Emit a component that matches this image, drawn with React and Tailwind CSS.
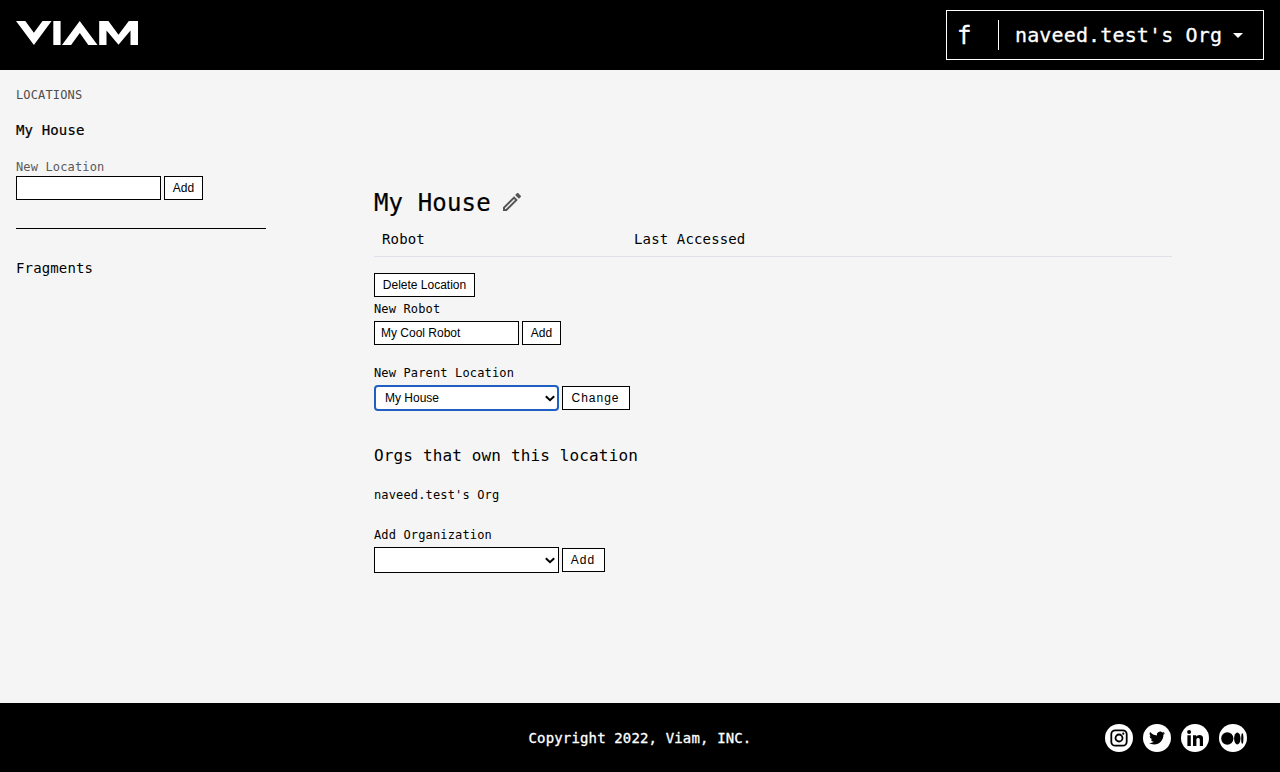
import React from 'react';

const button = 'h-6 shrink-0 border border-black bg-white text-center font-["Liberation_Sans",Arial,sans-serif] text-[12px] leading-[22px] whitespace-nowrap';
const field = 'border border-black bg-white font-["Liberation_Sans",Arial,sans-serif] text-[12px]';

function Logo() {
  return (
    <svg className="mt-[21px] h-6 w-[122px]" viewBox="0 0 122 24" fill="#fff" aria-label="Viam">
      <path d="M0 0h9.300l8.600 11.800L26.500 0h9.100L17.900 24z" />
      <path d="M37.300 0h7.300v24h-7.300z" />
      <path d="M63.700 0l17.800 24h-9.200l-8.500-12L55.100 24H46z" />
      <path d="M83.200 0h9.200L102.500 13.800 112.800 0H122v24h-7.500V9.500L102.500 23.800 90.500 9.500V24h-7.300z" />
    </svg>
  );
}

function Select({ children, focused }) {
  return (
    <div
      className={
        focused
          ? 'flex h-[26px] w-[185px] items-center justify-between rounded-[4px] border-2 border-[#1f5fc4] bg-white pl-[9px] pr-[2px] font-["Liberation_Sans",Arial,sans-serif] text-[12px]'
          : 'flex h-[26px] w-[185px] items-center justify-between border border-black bg-white pl-[10px] pr-[3px] font-["Liberation_Sans",Arial,sans-serif] text-[12px]'
      }
    >
      <span>{children}</span>
      <svg className="h-[7px] w-[10px]" viewBox="0 0 10 7" fill="none" stroke="#000" strokeWidth="2">
        <path d="M.8 1.200L5 5.200l4.200-4" />
      </svg>
    </div>
  );
}

function Social({ label, children }) {
  return (
    <a aria-label={label} className="flex size-7 items-center justify-center rounded-full bg-white text-black">
      {children}
    </a>
  );
}

export default function App() {
  return (
    <div className='flex h-[772px] w-full flex-col bg-[#f5f5f5] font-["DejaVu_Sans_Mono",monospace] tracking-[0.009em] text-black'>
      <header className="flex h-[70px] shrink-0 justify-between bg-black px-4 text-white">
        <Logo />
        <div className="mt-[10px] flex h-[50px] w-[318px] items-center border border-white [-webkit-text-stroke:0.3px_white]">
          <span className="w-[51px] pt-[2px] pl-[10px] text-[24px] leading-none">f</span>
          <span className="h-[30px] w-px bg-white" />
          <span className="ml-4 w-[208px] whitespace-nowrap text-[20px] leading-[30px]">naveed.test's Org</span>
          <svg className="ml-[10px] h-[5px] w-[10px]" viewBox="0 0 10 5" fill="#fff">
            <path d="M0 0h10L5 5z" />
          </svg>
        </div>
      </header>

      <div className="flex min-h-0 grow">
        <aside className="ml-4 w-[250px] shrink-0">
          <h2 className="mt-4 text-[12px] leading-[18px] text-[#4d4d4d]">LOCATIONS</h2>
          <div className="mt-4 text-[14px] leading-5 [-webkit-text-stroke:0.2px_black]">My House</div>
          <div className="mt-[19px] text-[12px] leading-4 text-[#5a5a5a]">New Location</div>
          <div className="mt-px flex gap-[3px]">
            <div className={`${field} h-6 w-[145px]`} />
            <button className={`${button} w-[39px] tracking-normal`}>Add</button>
          </div>
          <hr className="mt-7 border-t border-black" />
          <div className="mt-[29px] text-[14px] leading-5">Fragments</div>
        </aside>

        <main className="ml-[108px] w-[798px] pt-[115px]">
          <div className="flex h-9 items-center">
            <h1 className="w-[118px] text-[24px] leading-9 whitespace-nowrap [-webkit-text-stroke:0.2px_black]">My House</h1>
            <svg className="mb-[2px] ml-[8px] size-6" viewBox="0 0 24 24" fill="#555">
              <path d="M14.060 9.020l.92.920L5.920 19H5v-.92l9.060-9.060M17.660 3c-.25 0-.51.100-.7.290l-1.830 1.830 3.750 3.750 1.830-1.830c.39-.39.39-1.020 0-1.410l-2.340-2.340c-.2-.2-.45-.29-.71-.29zm-3.600 3.190L3 17.250V21h3.750L17.810 9.940l-3.750-3.750z" />
            </svg>
          </div>
          <div className="flex h-9 border-b border-[#dfe0ea] px-2 text-[14px] leading-[37px]">
            <span className="w-[252px]">Robot</span>
            <span>Last Accessed</span>
          </div>
          <button className={`${button} mt-4 block w-[101px] tracking-normal`}>Delete Location</button>
          <div className="mt-1 text-[12px] leading-4">New Robot</div>
          <div className="mt-1 flex gap-[3px]">
            <div className={`${field} h-6 w-[145px] pl-[6px] leading-[22px] tracking-normal`}>My Cool Robot</div>
            <button className={`${button} w-[39px] tracking-normal`}>Add</button>
          </div>
          <div className="mt-5 text-[12px] leading-4">New Parent Location</div>
          <div className="mt-1 flex items-center gap-[3px] tracking-normal">
            <Select focused>My House</Select>
            <button className={`${button} w-[68px] pr-px tracking-[1px]`}>Change</button>
          </div>
          <h3 className="mt-[33px] text-[16px] leading-6">Orgs that own this location</h3>
          <div className="mt-[19px] text-[12px] leading-4">naveed.test's Org</div>
          <div className="mt-6 text-[12px] leading-4">Add Organization</div>
          <div className="mt-1 flex items-center gap-[3px] tracking-normal">
            <Select />
            <button className={`${button} w-[43px] pr-px tracking-[1px]`}>Add</button>
          </div>
        </main>
      </div>

      <footer className="grid h-[69px] shrink-0 grid-cols-3 items-center bg-black pr-[33px] pl-[33px] text-white">
        <p className="col-start-2 text-center text-[14px] leading-5 whitespace-nowrap [-webkit-text-stroke:0.3px_white]">Copyright 2022, Viam, INC.</p>
        <div className="flex justify-end gap-[10px]">
          <Social label="Instagram">
            <svg className="size-[18px]" viewBox="0 0 18 18" fill="none" stroke="#000" strokeWidth="1.800">
              <rect x="1.300" y="1.300" width="15.400" height="15.400" rx="4" />
              <circle cx="9" cy="9" r="3.500" />
              <circle cx="13.300" cy="4.700" r="1.100" fill="#000" stroke="none" />
            </svg>
          </Social>
          <Social label="Twitter">
            <svg className="mt-px ml-px size-4" viewBox="0 0 24 24" fill="#000">
              <path d="M23.953 4.570a10 10 0 01-2.825.775 4.958 4.958 0 002.163-2.723c-.951.555-2.005.959-3.127 1.184a4.920 4.920 0 00-8.384 4.482C7.690 8.095 4.067 6.130 1.640 3.162a4.822 4.822 0 00-.666 2.475c0 1.710.870 3.213 2.188 4.096a4.904 4.904 0 01-2.228-.616v.06a4.923 4.923 0 003.946 4.827 4.996 4.996 0 01-2.212.085 4.936 4.936 0 004.604 3.417 9.867 9.867 0 01-6.102 2.105c-.39 0-.779-.023-1.170-.067a13.995 13.995 0 007.557 2.209c9.053 0 13.998-7.496 13.998-13.985 0-.21 0-.42-.015-.63A9.935 9.935 0 0024 4.590z" />
            </svg>
          </Social>
          <Social label="LinkedIn">
            <svg className="size-4" viewBox="0 0 16 16" fill="#000">
              <circle cx="2.100" cy="2" r="2" />
              <path d="M.4 5.300h3.400V16H.4zM6 5.300h3.200v1.500c.6-1 1.700-1.800 3.300-1.800 3.200 0 3.700 2.100 3.700 4.900V16h-3.400v-5.300c0-1.400-.1-2.700-1.700-2.700s-1.700 1.200-1.700 2.600V16H6z" />
            </svg>
          </Social>
          <Social label="Medium">
            <svg className="mt-[2px] h-[13px] w-[23px]" viewBox="0 0 23 13" fill="#000">
              <ellipse cx="6.300" cy="6.500" rx="6.100" ry="6.200" />
              <ellipse cx="16.300" cy="6.500" rx="3.200" ry="5.900" />
              <ellipse cx="21.300" cy="6.500" rx="1.100" ry="5.300" />
            </svg>
          </Social>
        </div>
      </footer>
    </div>
  );
}
